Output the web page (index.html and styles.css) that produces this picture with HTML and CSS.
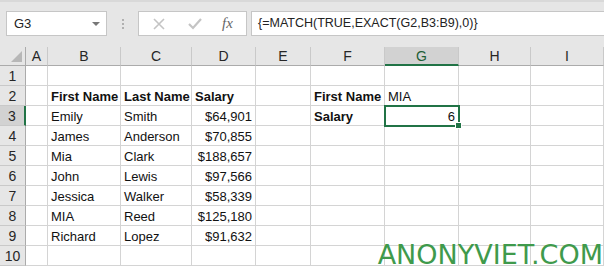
FILE: index.html
```html
<!DOCTYPE html>
<html lang="en">
  <head>
    <meta charset="utf-8">
    <title>Excel - MATCH EXACT</title>
    <link rel="stylesheet" href="styles.css">
  </head>
  <body>
  <div class="app">
      <!-- formula bar -->
      <div class="formula-bar">
          <div class="name-box"><span>G3</span><span class="drop"></span></div>
          <div class="grip"><i></i><i></i><i></i></div>
          <div class="fx-buttons">
              <svg class="ic" width="14" height="14" viewBox="0 0 14 14"><path d="M2 2 L12 12 M12 2 L2 12" stroke="#c4c4c4" stroke-width="1.6" fill="none"/></svg>
              <svg class="ic" width="16" height="14" viewBox="0 0 16 14"><path d="M2 7 L6 11 L14 2" stroke="#c4c4c4" stroke-width="2.2" fill="none"/></svg>
              <span class="fx">fx</span>
          </div>
          <div class="formula">{=MATCH(TRUE,EXACT(G2,B3:B9),0)}</div>
      </div>

      <!-- sheet -->
      <div class="sheet">
          <div class="corner"></div>
          <div class="hd">A</div><div class="hd">B</div><div class="hd">C</div><div class="hd">D</div><div class="hd">E</div><div class="hd">F</div><div class="hd on">G</div><div class="hd">H</div><div class="hd">I</div>

          <div class="rh">1</div>
          <div class="c"></div><div class="c"></div><div class="c"></div><div class="c"></div><div class="c"></div><div class="c"></div><div class="c"></div><div class="c"></div><div class="c"></div>

          <div class="rh">2</div>
          <div class="c"></div><div class="c b">First Name</div><div class="c b">Last Name</div><div class="c b">Salary</div><div class="c"></div><div class="c b">First Name</div><div class="c">MIA</div><div class="c"></div><div class="c"></div>

          <div class="rh on">3</div>
          <div class="c"></div><div class="c">Emily</div><div class="c">Smith</div><div class="c r">$64,901</div><div class="c"></div><div class="c b">Salary</div><div class="c r sel">6</div><div class="c"></div><div class="c"></div>

          <div class="rh">4</div>
          <div class="c"></div><div class="c">James</div><div class="c">Anderson</div><div class="c r">$70,855</div><div class="c"></div><div class="c"></div><div class="c"></div><div class="c"></div><div class="c"></div>

          <div class="rh">5</div>
          <div class="c"></div><div class="c">Mia</div><div class="c">Clark</div><div class="c r">$188,657</div><div class="c"></div><div class="c"></div><div class="c"></div><div class="c"></div><div class="c"></div>

          <div class="rh">6</div>
          <div class="c"></div><div class="c">John</div><div class="c">Lewis</div><div class="c r">$97,566</div><div class="c"></div><div class="c"></div><div class="c"></div><div class="c"></div><div class="c"></div>

          <div class="rh">7</div>
          <div class="c"></div><div class="c">Jessica</div><div class="c">Walker</div><div class="c r">$58,339</div><div class="c"></div><div class="c"></div><div class="c"></div><div class="c"></div><div class="c"></div>

          <div class="rh">8</div>
          <div class="c"></div><div class="c">MIA</div><div class="c">Reed</div><div class="c r">$125,180</div><div class="c"></div><div class="c"></div><div class="c"></div><div class="c"></div><div class="c"></div>

          <div class="rh">9</div>
          <div class="c"></div><div class="c">Richard</div><div class="c">Lopez</div><div class="c r">$91,632</div><div class="c"></div><div class="c"></div><div class="c"></div><div class="c"></div><div class="c"></div>

          <div class="rh">10</div>
          <div class="c"></div><div class="c"></div><div class="c"></div><div class="c"></div><div class="c"></div><div class="c"></div><div class="c"></div><div class="c"></div><div class="c"></div>
      </div>

      <div class="watermark">ANONYVIET.COM</div>
  </div>
  </body>
</html>
```

FILE: styles.css
```css
/* page reset */
body {
    margin: 0;
    font-family: "Liberation Sans", Arial, sans-serif;
    background-color: #ffffff;
}

.app {
    position: relative;
    width: 604px;
    height: 267px;
    overflow: hidden;
    background-color: #ffffff;
}

/* top formula bar */
.formula-bar {
    height: 47px;
    background-color: #e6e6e6;
    border-top: 2px solid #d9d9d9;
    box-sizing: border-box;
    display: flex;
    align-items: flex-start;
    padding-top: 9px;
}

.name-box {
    width: 101px;
    height: 25px;
    margin-left: 6px;
    box-sizing: border-box;
    background-color: #ffffff;
    border: 1px solid #c6c6c6;
    display: flex;
    align-items: center;
    justify-content: space-between;
    padding: 0 6px 0 7px;
    font-size: 13px;
    color: #222;
}

.drop {
    width: 0;
    height: 0;
    border-left: 4px solid transparent;
    border-right: 4px solid transparent;
    border-top: 4px solid #777;
}

.grip {
    width: 31px;
    height: 25px;
    display: flex;
    flex-direction: column;
    align-items: center;
    justify-content: center;
    gap: 2px;
}
.grip i {
    width: 2px;
    height: 2px;
    background-color: #b0b0b0;
}

.fx-buttons {
    width: 109px;
    height: 25px;
    box-sizing: border-box;
    background-color: #ffffff;
    border: 1px solid #c6c6c6;
    display: flex;
    align-items: center;
    padding-left: 13px;
    gap: 21px;
}

.fx {
    font-family: "Liberation Serif", serif;
    font-style: italic;
    font-size: 15px;
    color: #666;
    margin-left: -2px;
}

.formula {
    flex: 1;
    height: 25px;
    margin-left: 4px;
    box-sizing: border-box;
    background-color: #ffffff;
    border: 1px solid #c6c6c6;
    border-right: none;
    padding-left: 6px;
    line-height: 23px;
    font-size: 12.5px;
    color: #222;
}

/* worksheet grid */
.sheet {
    display: grid;
    grid-template-columns: 26px 22px 73px 71px 64px 55px 74px 74px 72px 73px;
    grid-template-rows: 19px repeat(10, 20px);
    font-size: 13px;
    color: #111;
}

.corner {
    position: relative;
    background-color: #e6e6e6;
    border-right: 1px solid #ababab;
    border-bottom: 1px solid #ababab;
}
.corner::after {
    content: "";
    position: absolute;
    right: 3px;
    bottom: 3px;
    width: 0;
    height: 0;
    border-left: 11px solid transparent;
    border-bottom: 11px solid #b7b7b7;
}

.hd {
    background-color: #e6e6e6;
    border-right: 1px solid #c9c9c9;
    border-bottom: 1px solid #ababab;
    text-align: center;
    font-size: 14px;
    line-height: 19px;
    color: #262626;
}
.hd.on {
    background-color: #d2d2d2;
    border-bottom: 2px solid #217346;
    color: #1e5e36;
    line-height: 18px;
}

.rh {
    background-color: #e6e6e6;
    border-right: 1px solid #ababab;
    border-bottom: 1px solid #c9c9c9;
    text-align: center;
    font-size: 14px;
    line-height: 20px;
    color: #262626;
}
.rh.on {
    background-color: #d2d2d2;
    border-right: 2px solid #217346;
}

.c {
    border-right: 1px solid #d4d4d4;
    border-bottom: 1px solid #d4d4d4;
    display: flex;
    align-items: flex-end;
    padding: 0 3px;
    line-height: 16px;
    white-space: nowrap;
}
.c.b {
    font-weight: bold;
}
.c.r {
    justify-content: flex-end;
}

/* selected cell */
.c.sel {
    position: relative;
    outline: 2px solid #217346;
    outline-offset: -1px;
    z-index: 1;
}
.c.sel::after {
    content: "";
    position: absolute;
    right: -4px;
    bottom: -4px;
    width: 5px;
    height: 5px;
    background-color: #217346;
    border: 1px solid #ffffff;
}

/* watermark over the sheet */
.watermark {
    position: absolute;
    right: 1px;
    bottom: 1px;
    font-family: "DejaVu Sans", sans-serif;
    font-size: 27px;
    line-height: 22px;
    color: #3f9a4c;
}
```
